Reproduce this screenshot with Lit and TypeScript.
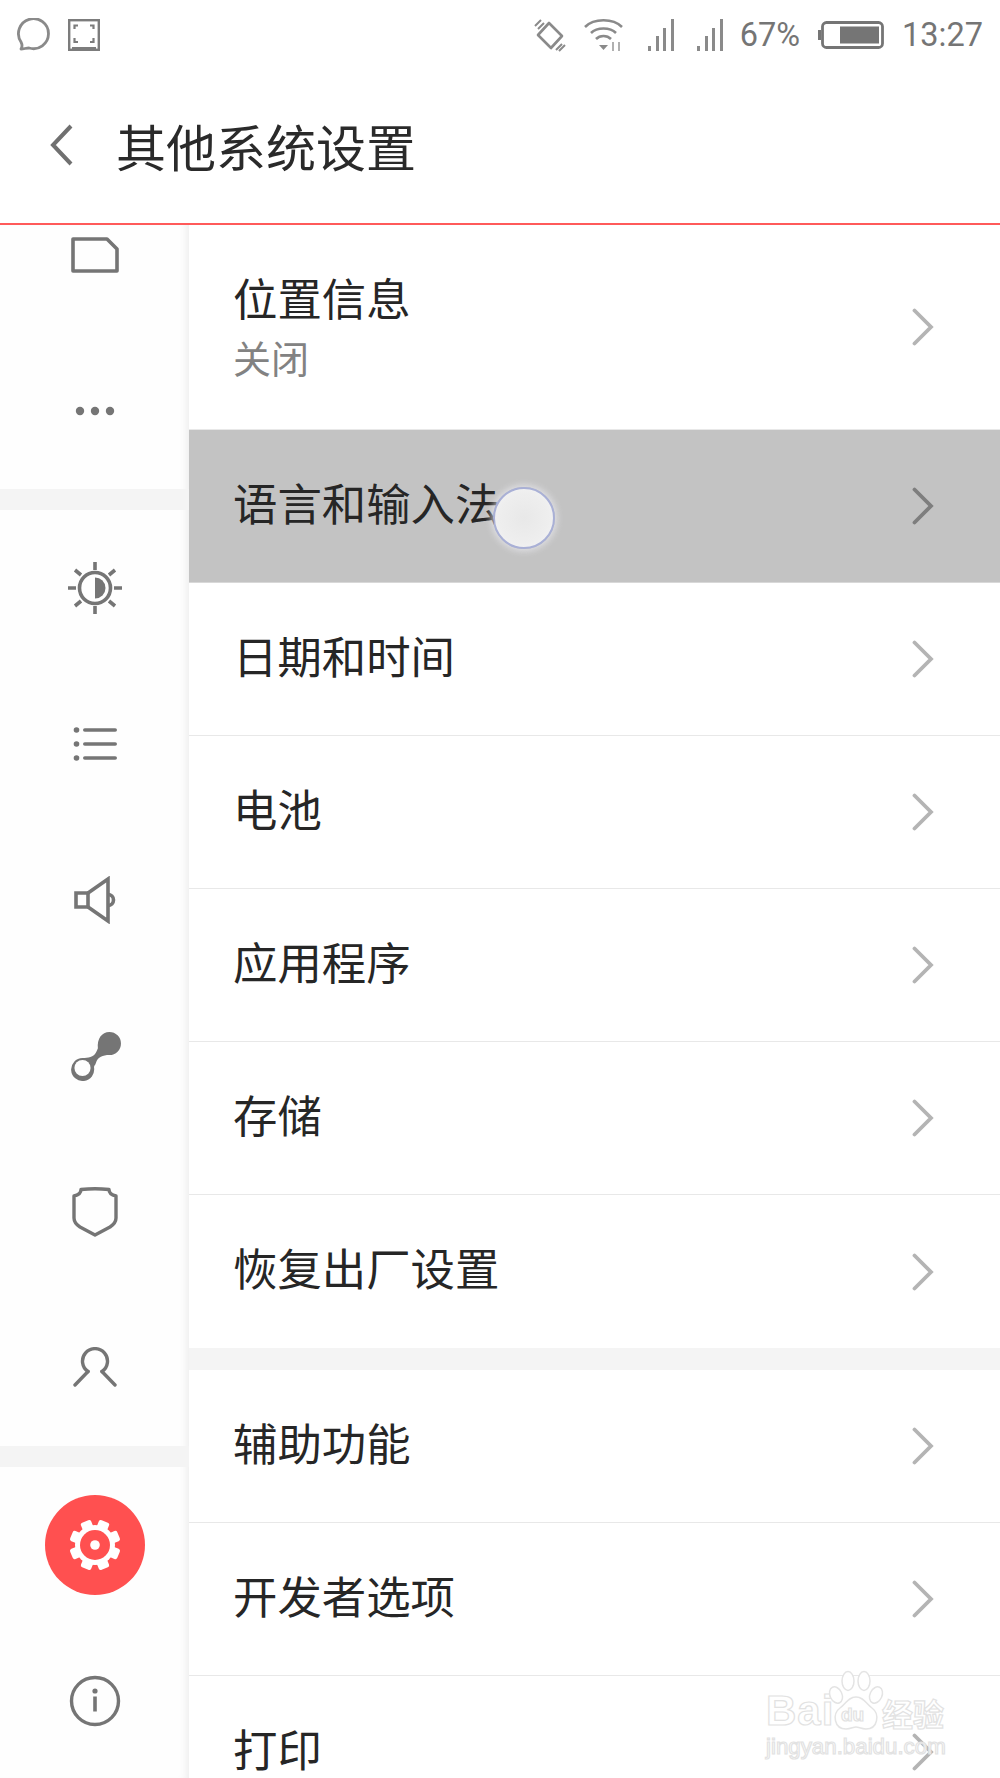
import { LitElement, html, css, svg } from "lit";
import { customElement } from "lit/decorators.js";

const G = "#757575";

const simIcon = html`<svg width="48" height="36" viewBox="0 0 48 36"><path d="M2 2H36L46 12V34H2Z" fill="none" stroke="${G}" stroke-width="3.6" stroke-linejoin="round"/></svg>`;
const dotsIcon = html`<svg width="40" height="10" viewBox="0 0 40 10"><circle cx="5" cy="5" r="4.2" fill="${G}"/><circle cx="20" cy="5" r="4.2" fill="${G}"/><circle cx="35" cy="5" r="4.2" fill="${G}"/></svg>`;
const sunIcon = html`<svg width="54" height="52" viewBox="-27 -26 54 52" fill="none" stroke="${G}" stroke-width="3.6">
  <circle r="15.5"/><path d="M0-10.5A10.5 10.5 0 0 1 0 10.5Z" fill="${G}" stroke="none"/>
  <path d="M0-26V-18M0 18V26M-27 0H-19M19 0H27M-20-18L-14-13M20-18L14-13M-20 18L-14 13M20 18L14 13"/></svg>`;
const listIcon = html`<svg width="44" height="36" viewBox="0 0 44 36" fill="${G}"><circle cx="3.5" cy="4" r="2.8"/><circle cx="3.5" cy="18" r="2.8"/><circle cx="3.5" cy="32" r="2.8"/><rect x="10" y="2.2" width="34" height="3.6" rx="1.8"/><rect x="10" y="16.2" width="34" height="3.6" rx="1.8"/><rect x="10" y="30.2" width="34" height="3.6" rx="1.8"/></svg>`;
const speakerIcon = html`<svg width="42" height="48" viewBox="0 0 42 48" fill="none" stroke="${G}" stroke-width="3.6"><path d="M2 17H14V31H2Z"/><path d="M14 17L34 3V45L14 31"/><path d="M34 18.500A5.500 5.500 0 0 1 34 29.500" /></svg>`;
const shareIcon = html`<svg width="52" height="50" viewBox="0 0 54 52"><path d="M42 1A12 12 0 0 1 42 25C35 25 30 27 28 33C27 37 24 38 22 34C24 27 28 24 30 18C29 8 34 1 42 1Z" fill="${G}"/><path d="M14 28C20 28 25 27 29 22L31 25C28 29 26 34 26 38A12 12 0 1 1 14 28Z" fill="${G}"/><circle cx="14" cy="38.500" r="8.400" fill="#fefefe"/></svg>`;
const shieldIcon = html`<svg width="46" height="50" viewBox="0 0 46 50"><path d="M9 2.500Q23 1 37 2.500Q37 7.500 44 9V31Q44 36 38 40L23 48L8 40Q2 36 2 31V9Q9 7.500 9 2.500Z" fill="none" stroke="${G}" stroke-width="3.4" stroke-linejoin="round"/></svg>`;
const personIcon = html`<svg width="44" height="42" viewBox="0 0 44 42" fill="none" stroke="${G}" stroke-width="3.400" stroke-linecap="round"><path d="M15 24.500A12.500 12.500 0 1 1 29 24.500"/><path d="M15 24.500L2 38M29 24.500L42 38"/></svg>`;
const gearTeeth = [0, 45, 90, 135, 180, 225, 270, 315].map(
  (a) => svg`<rect x="-5.5" y="-25.5" width="11" height="10" rx="2.200" transform="rotate(${a + 22.5})"/>`
);
const gearIcon = html`<svg width="52" height="52" viewBox="-26 -26 52 52"><g fill="#fff">${gearTeeth}<circle r="20"/></g><circle r="15" fill="#ff5050"/><circle r="4.800" fill="#fff"/></svg>`;
const infoIcon = html`<svg width="52" height="52" viewBox="0 0 52 52" fill="none"><circle cx="26" cy="26" r="23.500" stroke="${G}" stroke-width="3.400"/><circle cx="26" cy="16" r="2.600" fill="${G}"/><rect x="24.200" y="21.500" width="3.600" height="15" fill="${G}"/></svg>`;

const chevron = (color: string) => html`<svg class="chev" width="22" height="38" viewBox="0 0 22 38"><path d="M2.500 2.500L19 19L2.500 35.500" fill="none" stroke="${color}" stroke-width="3.800" stroke-linecap="round"/></svg>`;

const S = "#8a8a8a";
const chatIcon = html`<svg width="34" height="34" viewBox="0 0 34 34"><path d="M4 31C6 28 5 26 4 24A15 15 0 1 1 12 30C9 30 7 31 4 31Z" fill="none" stroke="${S}" stroke-width="2.800" stroke-linejoin="round"/></svg>`;
const shotIcon = html`<svg width="32" height="32" viewBox="0 0 32 32" fill="none" stroke="#7c7c7c"><rect x="1.200" y="1.200" width="29.600" height="29.600" stroke-width="2.400"/><path d="M4 29.500H28" stroke-width="3"/><path d="M6.500 10V6.500H10M22 6.500H25.500V10M6.500 19V23H10M22 23H25.500V19" stroke-width="2.200"/></svg>`;
const rotateIcon = html`<svg width="32" height="34" viewBox="0 0 32 34" fill="none" stroke="${S}" stroke-width="2.600"><path d="M15 5L28 18L17 30L4 17Z" stroke-linejoin="round"/><path d="M1 8L7 2M4 11L10 5M22 32L28 26M25 33L31 27" stroke-width="2"/></svg>`;
const wifiIcon = html`<svg width="40" height="34" viewBox="0 0 40 34" fill="none" stroke="${S}" stroke-width="2.600"><path d="M1 9C10 0 29 0 38 9"/><path d="M7 15C13 9 26 9 32 15"/><path d="M12 21C16 17 23 17 27 21"/><path d="M15 27H24L19.500 32Z" fill="${S}" stroke="none"/><path d="M29 24V33M35 24V33" stroke-width="2" stroke="#b0b0b0"/></svg>`;
const signalIcon = html`<svg width="26" height="32" viewBox="0 0 26 32" fill="${S}"><rect x="0" y="27" width="3" height="5"/><rect x="8" y="17" width="3" height="15"/><rect x="15" y="9" width="3" height="23" /><rect x="23" y="0" width="3" height="32"/></svg>`;
const batteryIcon = html`<svg width="66" height="28" viewBox="0 0 66 28"><rect x="0" y="9" width="3" height="10" fill="${G}"/><rect x="4.500" y="1.500" width="60" height="25" rx="4" fill="none" stroke="${G}" stroke-width="2.800"/><rect x="22" y="5.500" width="39" height="17" fill="${G}"/></svg>`;
const backIcon = html`<svg width="26" height="42" viewBox="0 0 26 42"><path d="M22 2L4 21L22 40" fill="none" stroke="#707070" stroke-width="4"/></svg>`;

const pawIcon = html`<svg width="56" height="62" viewBox="0 0 56 62" fill="#fff" stroke="#e4e4e4" stroke-width="1.500"><ellipse cx="20" cy="11" rx="6" ry="9.500"/><ellipse cx="36" cy="11" rx="6" ry="9.500"/><ellipse cx="8" cy="25" rx="6" ry="8.500" transform="rotate(-25 8 25)"/><ellipse cx="48" cy="25" rx="6" ry="8.500" transform="rotate(25 48 25)"/><path d="M28 27C36 27 38 34 44 38C52 44 50 59 38 59C33 59 31 57 28 57C25 57 23 59 18 59C6 59 4 44 12 38C18 34 20 27 28 27Z"/></svg>`;

type Row = { title: string; sub?: string; active?: boolean };
const group1: Row[] = [
  { title: "位置信息", sub: "关闭" },
  { title: "语言和输入法", active: true },
  { title: "日期和时间" },
  { title: "电池" },
  { title: "应用程序" },
  { title: "存储" },
  { title: "恢复出厂设置" },
];
const group2: Row[] = [{ title: "辅助功能" }, { title: "开发者选项" }, { title: "打印" }];

@customElement("app-root")
export class AppRoot extends LitElement {
  static styles = css`
    :host {
      display: block;
      position: relative;
      width: 1000px;
      height: 1778px;
      overflow: hidden;
      background: #fff;
      font-family: "Noto Sans CJK SC", "Noto Sans", sans-serif;
    }
    .status {
      height: 64px;
      display: flex;
      align-items: center;
      padding: 6px 17px 0;
      box-sizing: border-box;
      color: #757575;
      font-family: Roboto, sans-serif;
      font-size: 32.500px;
    }
    .status svg { display: block; flex: none; }
    .status-left { display: flex; align-items: center; gap: 17px; }
    .status-right { margin-left: auto; display: flex; align-items: center; }
    .status-right .wifi { margin-left: 18px; }
    .status-right .sig1 { margin-left: 24px; }
    .status-right .sig2 { margin-left: 23px; }
    .pct { margin-left: 17px; }
    .bat { margin-left: 18px; }
    .time { margin-left: 18px; }
    .header {
      height: 159px;
      display: flex;
      align-items: center;
      padding-left: 49px;
      border-bottom: 2px solid #ff5a5a;
    }
    .header svg { flex: none; margin-top: 2px; }
    .title {
      margin-left: 41px;
      margin-top: 2px;
      font-size: 50px;
      line-height: 60px;
      color: #2a2a2a;
    }
    .body { display: flex; height: 1553px; overflow: hidden; }
    .side {
      width: 189px;
      flex: none;
      background: #fefefe;
      box-shadow: inset -8px 0 8px -6px rgba(0, 0, 0, 0.08);
      position: relative;
      z-index: 1;
      display: flex;
      flex-direction: column;
    }
    .icon {
      height: 156px;
      flex: none;
      display: flex;
      align-items: center;
      justify-content: center;
    }
    .icon.first { margin-top: -48px; }
    .sgap { height: 21px; flex: none; background: #f4f4f4; }
    .gear {
      width: 100px;
      height: 100px;
      border-radius: 50%;
      background: #ff5050;
      display: flex;
      align-items: center;
      justify-content: center;
    }
    .list { flex: 1; display: flex; flex-direction: column; }
    .row {
      flex: none;
      height: 153px;
      box-sizing: border-box;
      display: flex;
      align-items: center;
      justify-content: space-between;
      padding: 0 66px 0 44px;
      border-bottom: 1.500px solid #e8e8e8;
      color: #262626;
      font-size: 44.400px;
      background: #fff;
    }
    .row.tall { height: 205px; }
    .row.active { background: #c3c3c3; border-bottom-color: #d8d8d8; }
    .row.last { border-bottom: none; }
    .texts { display: flex; flex-direction: column; padding-bottom: 9px; }
    .tall .texts { padding-bottom: 5px; }
    .t { line-height: 58px; }
    .sub { font-size: 38px; line-height: 50px; margin-top: 6px; color: #828282; }
    .chev { flex: none; }
    .lgap {
      height: 22px;
      flex: none;
      background: #f4f4f4;
    }
    .touch {
      position: absolute;
      left: 493px;
      top: 487px;
      width: 62px;
      height: 62px;
      box-sizing: border-box;
      border-radius: 50%;
      background: radial-gradient(circle, #e8e8e8 0%, #eeeeee 60%, #f6f6f8 100%);
      border: 2.500px solid #a9b0d6;
      box-shadow: 0 0 7px 2px rgba(235, 235, 240, 0.75);
      z-index: 3;
    }
    .mark {
      position: absolute;
      left: 766px;
      top: 1670px;
      width: 182px;
      z-index: 4;
      font-family: "Liberation Sans", sans-serif;
      color: rgba(255, 255, 255, 0.85);
      -webkit-text-stroke: 1.200px #e2e2e2;
      display: flex;
      flex-direction: column;
    }
    .logo { display: flex; align-items: flex-start; height: 63px; }
    .bai { font-size: 42px; font-weight: 700; line-height: 48px; margin-top: 17px; letter-spacing: 1px; width: 62px; }
    .paw { position: relative; width: 54px; flex: none; }
    .paw svg { display: block; }
    .du { position: absolute; left: 13px; top: 34px; font-size: 19px; font-weight: 700; line-height: 22px; }
    .jy { font-size: 31px; font-weight: 700; line-height: 36px; font-family: "Noto Sans CJK SC", sans-serif; white-space: nowrap; position: absolute; left: 116px; top: 25px; width: 66px; }
    .url { font-size: 22.300px; line-height: 28px; white-space: nowrap; }
  `;

  private renderRow(r: Row, last = false) {
    const cls = ["row", r.sub ? "tall" : "", r.active ? "active" : "", last ? "last" : ""].join(" ");
    return html`<div class=${cls}>
      <div class="texts">
        <div class="t">${r.title}</div>
        ${r.sub ? html`<div class="sub">${r.sub}</div>` : ""}
      </div>
      ${chevron(r.active ? "#7e7e7e" : "#b4b4b4")}
    </div>`;
  }

  render() {
    return html`
      <div class="status">
        <div class="status-left">${chatIcon}${shotIcon}</div>
        <div class="status-right">
          ${rotateIcon}
          <span class="wifi">${wifiIcon}</span>
          <span class="sig1">${signalIcon}</span>
          <span class="sig2">${signalIcon}</span>
          <span class="pct">67%</span>
          <span class="bat">${batteryIcon}</span>
          <span class="time">13:27</span>
        </div>
      </div>
      <div class="header">${backIcon}<div class="title">其他系统设置</div></div>
      <div class="body">
        <div class="side">
          <div class="icon first">${simIcon}</div>
          <div class="icon">${dotsIcon}</div>
          <div class="sgap"></div>
          <div class="icon">${sunIcon}</div>
          <div class="icon">${listIcon}</div>
          <div class="icon">${speakerIcon}</div>
          <div class="icon">${shareIcon}</div>
          <div class="icon">${shieldIcon}</div>
          <div class="icon">${personIcon}</div>
          <div class="sgap"></div>
          <div class="icon"><div class="gear">${gearIcon}</div></div>
          <div class="icon">${infoIcon}</div>
        </div>
        <div class="list">
          ${group1.map((r) => this.renderRow(r, r.title === "恢复出厂设置"))}
          <div class="lgap"></div>
          ${group2.map((r) => this.renderRow(r))}
        </div>
      </div>
      <div class="touch"></div>
      <div class="mark">
        <div class="logo">
          <div class="bai">Bai</div>
          <div class="paw">${pawIcon}<span class="du">du</span></div>
          <div class="jy">经验</div>
        </div>
        <div class="url">jingyan.baidu.com</div>
      </div>
    `;
  }
}
